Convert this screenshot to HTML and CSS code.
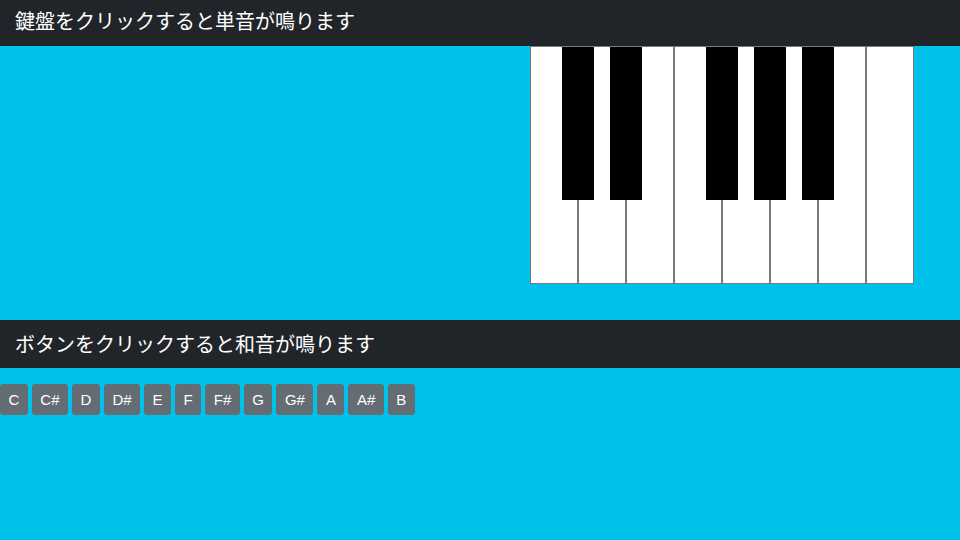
FILE: index.html
```html
<!DOCTYPE html>
<html lang="ja">
<head>
<meta charset="utf-8">
<link rel="stylesheet" href="styles.css">
</head>
<body>
<h2 class="bar bar-top">鍵盤をクリックすると単音が鳴ります</h2>
<div class="stage">
  <div class="piano">
    <div class="white"></div><div class="white"></div><div class="white"></div><div class="white"></div>
    <div class="white"></div><div class="white"></div><div class="white"></div><div class="white"></div>
    <div class="black" style="left:32px"></div>
    <div class="black" style="left:80px"></div>
    <div class="black" style="left:176px"></div>
    <div class="black" style="left:224px"></div>
    <div class="black" style="left:272px"></div>
  </div>
</div>
<h2 class="bar bar-bottom">ボタンをクリックすると和音が鳴ります</h2>
<div class="chords">
  <button class="btn">C</button>
  <button class="btn">C#</button>
  <button class="btn">D</button>
  <button class="btn">D#</button>
  <button class="btn">E</button>
  <button class="btn">F</button>
  <button class="btn">F#</button>
  <button class="btn">G</button>
  <button class="btn">G#</button>
  <button class="btn">A</button>
  <button class="btn">A#</button>
  <button class="btn">B</button>
</div>
</body>
</html>
```
FILE: styles.css
```css
html, body {
  margin: 0;
  padding: 0;
  background: #00c1eb;
  height: 100%;
}
body {
  font-family: "Liberation Sans", Arial, "Noto Sans CJK JP", sans-serif;
}
.bar {
  margin: 0;
  background: #212529;
  color: #fff;
  font-family: "Noto Sans CJK JP", sans-serif;
  font-weight: 400;
  font-size: 20px;
  padding: 0 15px;
  display: flex;
  align-items: center;
  box-sizing: border-box;
}
.bar-top { height: 46px; padding-bottom: 6px; }
.bar-bottom { height: 48px; padding-bottom: 2px; }
.stage {
  height: 274px;
  display: flex;
  justify-content: flex-end;
  align-items: flex-start;
  padding-right: 46px;
}
.piano {
  position: relative;
  display: flex;
  height: 238px;
}
.white {
  box-sizing: border-box;
  width: 48px;
  height: 238px;
  background: #fff;
  border: 1px solid #7a7a7a;
}
.black {
  position: absolute;
  top: 1px;
  width: 32px;
  height: 153px;
  background: #000;
}
.chords {
  display: flex;
  gap: 4px;
  padding-top: 16px;
}
.btn {
  font-family: "Liberation Sans", Arial, sans-serif;
  font-size: 15px;
  line-height: 21px;
  color: #fff;
  background: #656d74;
  border: 1px solid #656d74;
  border-radius: 3px;
  padding: 4px 7.5px;
  height: 31px;
  margin: 0;
}
```
